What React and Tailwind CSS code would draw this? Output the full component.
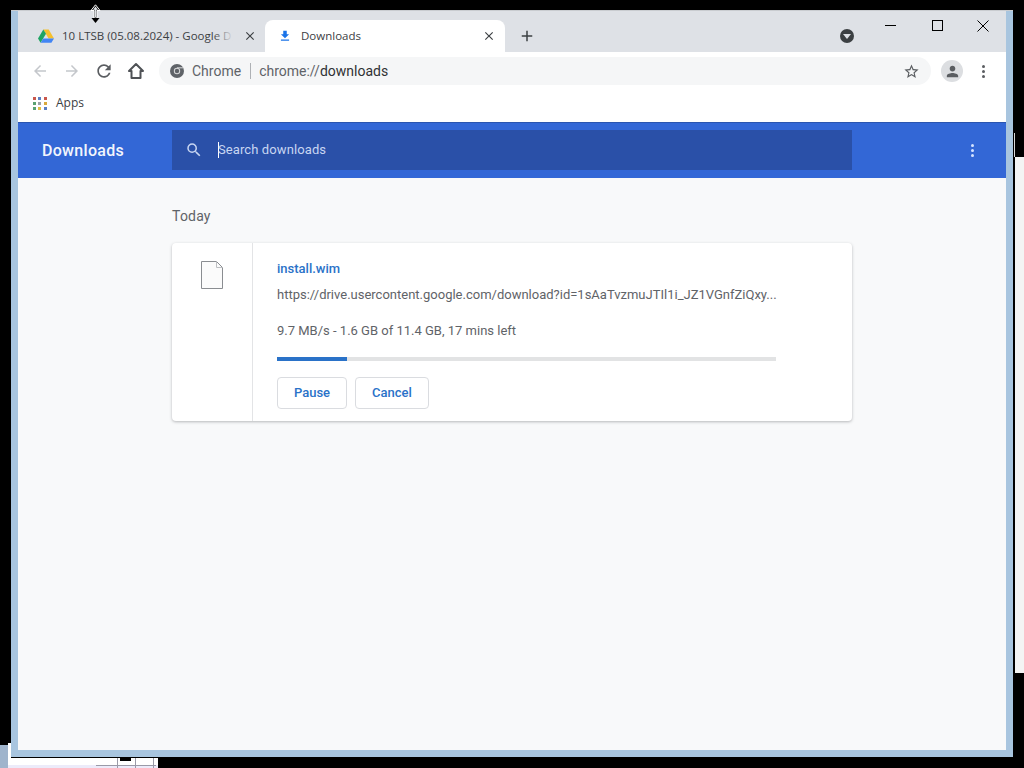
import React from "react";

const Icon = ({ d, className }) => (
    <svg viewBox="0 0 24 24" className={className} fill="currentColor">
        <path d={d} />
    </svg>
);

const paths = {
    back: "M20 11H7.83l5.59-5.59L12 4l-8 8 8 8 1.41-1.41L7.83 13H20v-2z",
    forward: "M4 11h12.17l-5.59-5.59L12 4l8 8-8 8-1.41-1.41L16.17 13H4v-2z",
    reload: "M17.65 6.35C16.2 4.9 14.21 4 12 4c-4.42 0-7.99 3.58-7.99 8s3.57 8 7.99 8c3.73 0 6.84-2.55 7.73-6h-2.08c-.82 2.33-3.04 4-5.65 4-3.31 0-6-2.69-6-6s2.69-6 6-6c1.66 0 3.14.69 4.22 1.78L13 11h7V4l-2.35 2.35z",
    star: "M22 9.24l-7.19-.62L12 2 9.19 8.63 2 9.24l5.46 4.73L5.82 21 12 17.27 18.18 21l-1.63-7.03L22 9.24zM12 15.4l-3.76 2.27 1-4.28-3.32-2.88 4.38-.38L12 6.1l1.71 4.04 4.38.38-3.32 2.88 1 4.28L12 15.4z",
    search: "M15.5 14h-.79l-.28-.27A6.471 6.471 0 0 0 16 9.5 6.5 6.5 0 1 0 9.5 16c1.61 0 3.09-.59 4.23-1.57l.27.28v.79l5 4.99L20.49 19l-4.99-5zm-6 0C7.01 14 5 11.99 5 9.5S7.01 5 9.5 5 14 7.01 14 9.5 11.99 14 9.5 14z",
    person: "M12 12c2.21 0 4-1.79 4-4s-1.79-4-4-4-4 1.79-4 4 1.79 4 4 4zm0 2c-2.67 0-8 1.34-8 4v2h16v-2c0-2.66-5.33-4-8-4z",
    download: "M19 9h-4V3H9v6H5l7 7 7-7zM5 18v2h14v-2H5z",
    close: "M19 6.41L17.59 5 12 10.59 6.41 5 5 6.41 10.59 12 5 17.59 6.41 19 12 13.41 17.59 19 19 17.59 13.41 12z",
    plus: "M19 13h-6v6h-2v-6H5v-2h6V5h2v6h6v2z",
};

const DriveLogo = () => (
    <svg viewBox="0 0 16 14" className="w-[16px] h-[14px] shrink-0">
        <path d="M5.3 0.5h5.4L16 9.5h-5.4z" fill="#f6c02c" />
        <path d="M5.3 0.5L0 9.5l2.6 4.2L8 4.7z" fill="#1fa463" />
        <path d="M2.6 13.7L5.3 9.5H16l-2.6 4.2z" fill="#4285f4" />
    </svg>
);

const ChromeLogo = () => (
    <svg viewBox="0 0 14 14" className="w-[14px] h-[14px] shrink-0">
        <circle cx="7" cy="7" r="7" fill="#5f6368" />
        <circle cx="7" cy="7" r="3.2" fill="#d8d9da" />
        <circle cx="7" cy="7" r="2.2" fill="#5f6368" />
        <path d="M7 3.8h6.2" stroke="#d8d9da" strokeWidth="1" />
    </svg>
);

const Dots = ({ className }) => (
    <div className={`flex flex-col gap-[2px] ${className}`}>
        <span className="w-[3px] h-[3px] rounded-full bg-current"></span>
        <span className="w-[3px] h-[3px] rounded-full bg-current"></span>
        <span className="w-[3px] h-[3px] rounded-full bg-current"></span>
    </div>
);

const appColors = ["#c9574c", "#5a7fc4", "#c9574c", "#5aa272", "#9aa0a6", "#d9a93c", "#5aa272", "#e0c048", "#5a7fc4"];

const AppsIcon = () => (
    <div className="grid grid-cols-3 gap-[2px] w-[14px] shrink-0">
        {appColors.map((color, index) => (
            <span key={index} className="w-[3px] h-[3px]" style={{ backgroundColor: color }}></span>
        ))}
    </div>
);

const TabStrip = () => (
    <div className="flex h-[41px] bg-[#dee1e6] shrink-0 font-['Open_Sans',sans-serif] text-[11.5px]">
        <div className="flex items-center w-[247px] h-[32px] mt-[9px] pl-[20px] pr-[8px]">
            <DriveLogo />
            <div className="relative ml-[8px] w-[171px] whitespace-nowrap text-[#3c4043]">
                10 LTSB (05.08.2024) - Google D
                <div className="absolute inset-y-0 right-0 w-[20px] bg-gradient-to-r from-transparent to-[#dee1e6]"></div>
            </div>
            <Icon d={paths.close} className="w-[14px] h-[14px] ml-[10px] text-[#3c4043]" />
        </div>
        <div className="flex items-center w-[240px] h-[32px] mt-[9px] pl-[13px] pr-[9px] bg-white rounded-t-lg">
            <Icon d={paths.download} className="w-[14px] h-[14px] text-[#1a73e8]" />
            <span className="ml-[9px] text-[#3c4043]">Downloads</span>
            <Icon d={paths.close} className="w-[14px] h-[14px] ml-auto text-[#3c4043]" />
        </div>
        <Icon d={paths.plus} className="w-[18px] h-[18px] ml-[13px] mt-[16px] text-[#3c4043]" />
        <div className="flex items-center justify-center w-[14px] h-[14px] rounded-full bg-[#3c4043] ml-[304px] mt-[18px]">
            <span className="w-0 h-0 border-x-[4px] border-x-transparent border-t-[5px] border-t-[#dee1e6] mt-[1px]"></span>
        </div>
        <div className="flex items-start ml-[31px] mt-[7px] text-black">
            <div className="w-[11px] h-px bg-black mt-[7px]"></div>
            <div className="w-[11px] h-[11px] border border-black mt-[2px] ml-[36px]"></div>
            <svg viewBox="0 0 12 12" className="w-[12px] h-[12px] mt-[2px] ml-[34px]" fill="none" stroke="currentColor">
                <path d="M0.5 0.5l11 11M11.5 0.5l-11 11" />
            </svg>
        </div>
    </div>
);

const Toolbar = () => (
    <div className="flex items-center h-[38px] bg-white shrink-0 pl-[13px]">
        <Icon d={paths.back} className="w-[18px] h-[18px] text-[#c4c7cb]" />
        <Icon d={paths.forward} className="w-[18px] h-[18px] ml-[14px] text-[#c4c7cb]" />
        <Icon d={paths.reload} className="w-[20px] h-[20px] ml-[13px] text-[#5a5d61]" />
        <svg viewBox="0 0 18 18" className="w-[18px] h-[18px] ml-[13px] text-[#4f5256]" fill="none" stroke="currentColor" strokeWidth="2">
            <path d="M9 2L2 9h2.5v7h9V9H16z" strokeLinejoin="round" />
        </svg>
        <div className="flex items-center ml-[14px] w-[772px] h-[28px] rounded-full bg-[#f5f6f7] pl-[11px] pr-[11px] font-['Roboto',sans-serif] text-[14px]">
            <ChromeLogo />
            <span className="ml-[8px] text-[#5f6368]">Chrome</span>
            <span className="w-px h-[16px] bg-[#aeb1b5] ml-[9px]"></span>
            <span className="ml-[8px] text-[#5f6368]">chrome://</span>
            <span className="text-[#303134]">downloads</span>
            <Icon d={paths.star} className="w-[17px] h-[17px] ml-auto text-[#5a5d61]" />
        </div>
        <div className="flex items-center justify-center w-[22px] h-[22px] ml-[10px] rounded-full bg-[#dcdee1]">
            <Icon d={paths.person} className="w-[17px] h-[17px] text-[#5a5d61]" />
        </div>
        <Dots className="ml-[19px] text-[#5a5d61]" />
    </div>
);

const BookmarkBar = () => (
    <div className="flex items-center h-[32px] bg-white shrink-0 pl-[15px] pb-[6px] font-['Open_Sans',sans-serif] text-[12px] text-[#3c4043]">
        <AppsIcon />
        <span className="ml-[9px]">Apps</span>
    </div>
);

const PageHeader = () => (
    <div className="flex items-center h-[56px] bg-[#3367d6] border-t border-[#2a55b0] shrink-0 font-['Roboto',sans-serif]">
        <div className="w-[154px] pl-[24px] text-[16px] font-medium tracking-[0.3px] text-[#f2f5fc] shrink-0">
            Downloads
        </div>
        <div className="flex items-center w-[680px] h-[40px] -mt-px bg-[#2a50a8] pl-[13px]">
            <Icon d={paths.search} className="w-[18px] h-[18px] text-[#c8d6f2]" />
            <span className="w-px h-[16px] bg-white ml-[15px]"></span>
            <span className="text-[13px] tracking-[0.1px] text-[#c8d6f2] -ml-px">Search downloads</span>
        </div>
        <Dots className="ml-[119px] text-[#d5e3ff]" />
    </div>
);

const DownloadCard = () => (
    <div className="flex w-[680px] h-[178px] mt-[19px] bg-white rounded shadow-[0_1px_3px_rgba(60,64,67,0.35)] text-[13px] text-[#5f6368]">
        <div className="flex justify-center w-[81px] pt-[18px] pr-[1px] border-r border-[#e3e4e6] shrink-0">
            <svg viewBox="0 0 22 28" className="w-[22px] h-[28px]" fill="#fbfbfb" stroke="#8a8d91">
                <path d="M0.5 0.5h15l6 6v21h-21z" />
                <path d="M15.5 0.5v6h6" fill="none" stroke="#bdbfc2" />
            </svg>
        </div>
        <div className="flex flex-col w-[499px] ml-[24px]">
            <div className="mt-[18px] font-medium text-[#2a72c8] leading-[15px]">install.wim</div>
            <div className="mt-[11px] whitespace-nowrap leading-[15px]">
                https://drive.usercontent.google.com/download?id=1sAaTvzmuJTIl1i_JZ1VGnfZiQxy...
            </div>
            <div className="mt-[21px] leading-[15px]">9.7 MB/s - 1.6 GB of 11.4 GB, 17 mins left</div>
            <div className="h-[4px] mt-[19px] bg-[#e2e3e4]">
                <div className="h-full bg-[#2a72c8]" style={{ width: "70px" }}></div>
            </div>
            <div className="flex gap-[8px] mt-[16px]">
                <button className="w-[70px] h-[32px] border border-[#dadce0] rounded font-medium text-[#2a72c8]">Pause</button>
                <button className="w-[74px] h-[32px] border border-[#dadce0] rounded font-medium text-[#2a72c8]">Cancel</button>
            </div>
        </div>
    </div>
);

export default function App() {
    return (
        <div className="relative w-[1024px] h-[768px] bg-black overflow-hidden">
            {/* windows lying behind the browser */}
            <div className="absolute left-[1014px] top-[133px] w-px h-[24px] bg-[#d8d8d8]"></div>
            <div className="absolute left-[1015px] top-[157px] w-[9px] h-[516px] bg-[#f4f4f4]"></div>
            <div className="absolute left-0 top-[745px] w-[8px] h-[23px] bg-[#9fb4cc]"></div>
            <div className="absolute left-[8px] top-[743px] w-[150px] h-[25px] bg-white">
                <div className="absolute left-0 right-0 bottom-0 h-[3px] bg-[#ecebfa]"></div>
                <div className="absolute left-[88px] top-[22px] w-[60px] h-px bg-[#9a9aa8]"></div>
                <div className="absolute left-[109px] top-[14px] w-px h-[11px] bg-[#9a9aa8]"></div>
                <div className="absolute left-[127px] top-[14px] w-px h-[11px] bg-[#9a9aa8]"></div>
                <div className="absolute left-[145px] top-[14px] w-px h-[11px] bg-[#9a9aa8]"></div>
                <div className="absolute left-[112px] top-[14px] w-[11px] h-[4px] border-2 border-black bg-white"></div>
            </div>

            <div className="relative flex flex-col w-[1002px] h-[747px] ml-[11px] mt-[10px] px-[7px] pb-[7px] bg-[#a8c5df] border-t border-[#c9ccd0] shadow-[0_1px_0_#000]">
                <TabStrip />
                <Toolbar />
                <BookmarkBar />
                <PageHeader />
                <div className="flex-1 bg-[#f8f9fa] pl-[154px] pt-[30px] font-['Roboto',sans-serif]">
                    <div className="text-[14px] leading-[16px] tracking-[0.2px] text-[#5f6368]">Today</div>
                    <DownloadCard />
                </div>
            </div>

            {/* resize cursor */}
            <svg viewBox="0 0 11 20" className="absolute left-[90px] top-[4px] w-[11px] h-[20px]">
                <path d="M5.5 0.8L10 6.5H7V14h-3V6.5H1z" fill="#000" stroke="#fff" strokeWidth="1" />
                <path d="M5.5 2.5L8 5.8H6.4V13H4.6V5.8H3z" fill="#dde0e4" />
                <path d="M1.5 14h8L5.5 19z" fill="#000" />
            </svg>
        </div>
    );
}
